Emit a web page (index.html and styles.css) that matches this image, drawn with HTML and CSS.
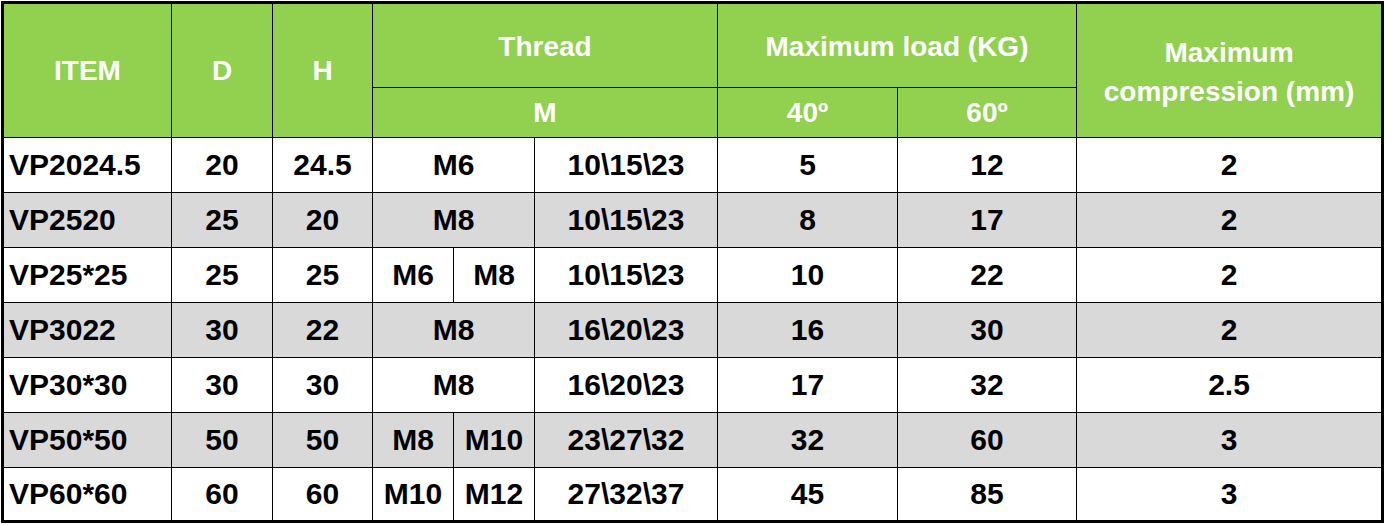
FILE: index.html
```html
<!DOCTYPE html>
<html>
<head>
<meta charset="utf-8">
<link rel="stylesheet" href="styles.css">
</head>
<body>
<table class="spec">
  <colgroup>
    <col class="c-item">
    <col class="c-d">
    <col class="c-h">
    <col class="c-ma">
    <col class="c-mb">
    <col class="c-tv">
    <col class="c-40">
    <col class="c-60">
    <col class="c-comp">
  </colgroup>
  <thead>
    <tr class="h1">
      <th rowspan="2">ITEM</th>
      <th rowspan="2">D</th>
      <th rowspan="2">H</th>
      <th colspan="3" class="top">Thread</th>
      <th colspan="2" class="top">Maximum load (KG)</th>
      <th rowspan="2" class="comp">Maximum<br>compression (mm)</th>
    </tr>
    <tr class="h2">
      <th colspan="3">M</th>
      <th>40º</th>
      <th>60º</th>
    </tr>
  </thead>
  <tbody>
    <tr>
      <td class="item">VP2024.5</td><td>20</td><td>24.5</td>
      <td colspan="2">M6</td><td>10\15\23</td><td>5</td><td>12</td><td>2</td>
    </tr>
    <tr class="alt">
      <td class="item">VP2520</td><td>25</td><td>20</td>
      <td colspan="2">M8</td><td>10\15\23</td><td>8</td><td>17</td><td>2</td>
    </tr>
    <tr>
      <td class="item">VP25*25</td><td>25</td><td>25</td>
      <td>M6</td><td>M8</td><td>10\15\23</td><td>10</td><td>22</td><td>2</td>
    </tr>
    <tr class="alt">
      <td class="item">VP3022</td><td>30</td><td>22</td>
      <td colspan="2">M8</td><td>16\20\23</td><td>16</td><td>30</td><td>2</td>
    </tr>
    <tr>
      <td class="item">VP30*30</td><td>30</td><td>30</td>
      <td colspan="2">M8</td><td>16\20\23</td><td>17</td><td>32</td><td>2.5</td>
    </tr>
    <tr class="alt">
      <td class="item">VP50*50</td><td>50</td><td>50</td>
      <td>M8</td><td>M10</td><td>23\27\32</td><td>32</td><td>60</td><td>3</td>
    </tr>
    <tr class="last">
      <td class="item">VP60*60</td><td>60</td><td>60</td>
      <td>M10</td><td>M12</td><td>27\32\37</td><td>45</td><td>85</td><td>3</td>
    </tr>
  </tbody>
</table>
</body>
</html>
```

FILE: styles.css
```css
html, body {
  margin: 0;
  padding: 0;
  background: #ffffff;
}

body {
  padding: 1px 0 0 1px;
}

.spec {
  border-collapse: collapse;
  table-layout: fixed;
  width: 1383px;
  border: 3px solid #000;
  font-family: "Liberation Sans", Arial, sans-serif;
  font-weight: bold;
}

.c-item { width: 169px; }
.c-d { width: 101px; }
.c-h { width: 100px; }
.c-ma { width: 81px; }
.c-mb { width: 81px; }
.c-tv { width: 183px; }
.c-40 { width: 180px; }
.c-60 { width: 179px; }
.c-comp { width: 306px; }

.spec th,
.spec td {
  border: 1px solid #000;
  padding: 0;
  text-align: center;
  vertical-align: middle;
  overflow: hidden;
  white-space: nowrap;
}

.spec th {
  background: #92d050;
  color: #ffffff;
  font-size: 28px;
  line-height: 32px;
}

.spec th.top {
  padding-top: 2px;
}

.spec th.comp {
  line-height: 39px;
  padding-top: 2px;
}

.h1 { height: 85px; }
.h2 { height: 50px; }

.spec td {
  font-size: 30px;
  line-height: 34px;
  color: #000;
  background: #ffffff;
}

.spec tbody tr { height: 55px; }
.spec tbody tr.last { height: 54px; }

.spec tr.alt td {
  background: #d9d9d9;
}

.spec td.item {
  text-align: left;
  padding-left: 5px;
}
```
